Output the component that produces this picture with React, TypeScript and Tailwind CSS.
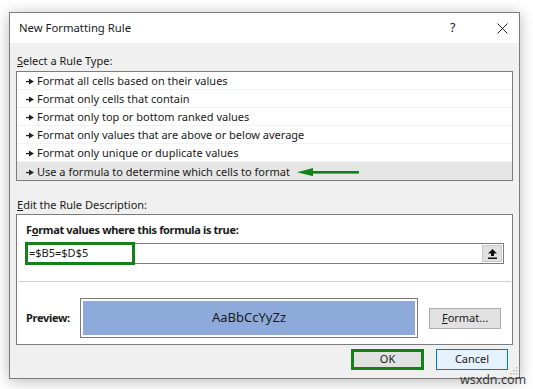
const rules = [
  "Format all cells based on their values",
  "Format only cells that contain",
  "Format only top or bottom ranked values",
  "Format only values that are above or below average",
  "Format only unique or duplicate values",
  "Use a formula to determine which cells to format",
];

function RuleArrow() {
  return (
    <svg width="8" height="7" viewBox="0 0 8 7" className="shrink-0">
      <rect x="0" y="2.9" width="4" height="1.3" fill="#222" />
      <polygon points="3,0.6 8,3.55 3,6.5" fill="#222" />
    </svg>
  );
}

export default function App() {
  return (
    <div
      className="relative w-[533px] h-[389px] bg-white pt-[12px] pl-[9px] text-[#1a1a1a]"
      style={{ fontFamily: '"Segoe UI", "Noto Sans", sans-serif' }}
    >
      <div className="w-[511px] h-[367px] border border-[#7c7c7c] bg-[#f0f0f0] flex flex-col shadow-[0_2px_14px_rgba(0,0,0,0.28)]">
        {/* title bar */}
        <div className="h-[30px] bg-white flex items-center pl-[9px] pr-[11px] text-[11.3px]">
          <span className="flex-1">New Formatting Rule</span>
          <span className="w-[10px] text-[12.5px] mr-[37px]">?</span>
          <svg width="11" height="11" viewBox="0 0 11 11">
            <path d="M0.5 0.5 L10.5 10.5 M10.5 0.5 L0.5 10.5" stroke="#222" strokeWidth="1" />
          </svg>
        </div>

        {/* body */}
        <div className="flex-1 flex flex-col px-[6px] pt-[10px] text-[11px]">
          <div className="h-[16px] leading-[16px] pl-[1px]">
            <span className="underline">S</span>elect a Rule Type:
          </div>
          <div className="mt-[2px] h-[110px] border border-[#7c7c7c] bg-white flex flex-col">
            {rules.map((r, i) => (
              <div
                key={r}
                className={
                  "h-[18px] flex items-center pl-[9px] pt-[2px] gap-[3px] " +
                  (i === rules.length - 1 ? "bg-[#e6e6e6]" : "border-b border-[#f3f3f3]")
                }
              >
                <RuleArrow />
                <span>{r}</span>
                {i === rules.length - 1 && (
                  <svg width="62" height="8" viewBox="0 0 62 8" className="ml-[4px]">
                    <rect x="12" y="3" width="50" height="2.6" fill="#13801a" />
                    <polygon points="0,4.3 16,0 16,8.2" fill="#13801a" />
                  </svg>
                )}
              </div>
            ))}
          </div>

          <div className="mt-[16px] h-[16px] leading-[16px] pl-[1px]">
            <span className="underline">E</span>dit the Rule Description:
          </div>
          <div className="mt-[1px] h-[131px] border border-[#7c7c7c] bg-white flex flex-col px-[8px]">
            <div className="mt-[7px] h-[16px] leading-[16px] pl-[1px] font-bold tracking-[-0.35px]">
              F<span className="underline">o</span>rmat values where this formula is true:
            </div>
            <div className="mt-[5px] h-[21px] border border-[#7c7c7c] flex items-center relative">
              <div className="h-[23px] w-[110px] -ml-[1px] border-[3px] border-[#13801a] flex items-center pl-[1px]">
                =$B5=$D$5
              </div>
              <div className="flex-1" />
              <div className="w-[20px] h-[17px] mr-[1px] bg-[#e1e1e1] border border-[#c8c8c8] flex items-center justify-center">
                <svg width="9" height="10" viewBox="0 0 9 10">
                  <polygon points="4.5,0 9,4.5 6,4.5 6,7 3,7 3,4.5 0,4.5" fill="#111" />
                  <rect x="0" y="8.5" width="9" height="1.5" fill="#111" />
                </svg>
              </div>
            </div>
            <div className="mt-[17px] h-px bg-[#d0d0d0] -mx-[7px]" />
            <div className="mt-[16px] flex items-center">
              <span className="w-[55px] pl-[1px] font-bold tracking-[-0.3px]">Preview:</span>
              <div className="w-[338px] h-[40px] border border-[#7c7c7c] p-[2px]">
                <div className="w-full h-full bg-[#8eaadb] flex items-center justify-center text-[13px]">
                  AaBbCcYyZz
                </div>
              </div>
              <div className="ml-[11px] w-[72px] h-[21px] bg-[#e1e1e1] border border-[#adadad] flex items-center justify-center">
                <span>
                  <span className="underline">F</span>ormat...
                </span>
              </div>
            </div>
          </div>

          <div className="mt-[4px] flex justify-end pr-[5px] gap-[12px]">
            <div className="w-[73px] h-[21px] bg-[#e1e1e1] border-[3px] border-[#13801a] flex items-center justify-center">
              OK
            </div>
            <div className="w-[72px] h-[21px] bg-[#e5f1fb] border border-[#0078d7] flex items-center justify-center">
              Cancel
            </div>
          </div>
        </div>
      </div>

      {/* resize grip */}
      <svg width="8" height="8" viewBox="0 0 8 8" className="absolute left-[510px] top-[367px]">
        <rect x="6" y="0" width="1.5" height="1.5" fill="#b5b5b5" />
        <rect x="3" y="3" width="1.5" height="1.5" fill="#b5b5b5" />
        <rect x="6" y="3" width="1.5" height="1.5" fill="#b5b5b5" />
        <rect x="0" y="6" width="1.5" height="1.5" fill="#b5b5b5" />
        <rect x="3" y="6" width="1.5" height="1.5" fill="#b5b5b5" />
        <rect x="6" y="6" width="1.5" height="1.5" fill="#b5b5b5" />
      </svg>

      {/* watermark */}
      <span className="absolute left-[460px] top-[372px] text-[12.5px] leading-[16px] text-[#3a3a3a]">
        wsxdn.com
      </span>
    </div>
  );
}
